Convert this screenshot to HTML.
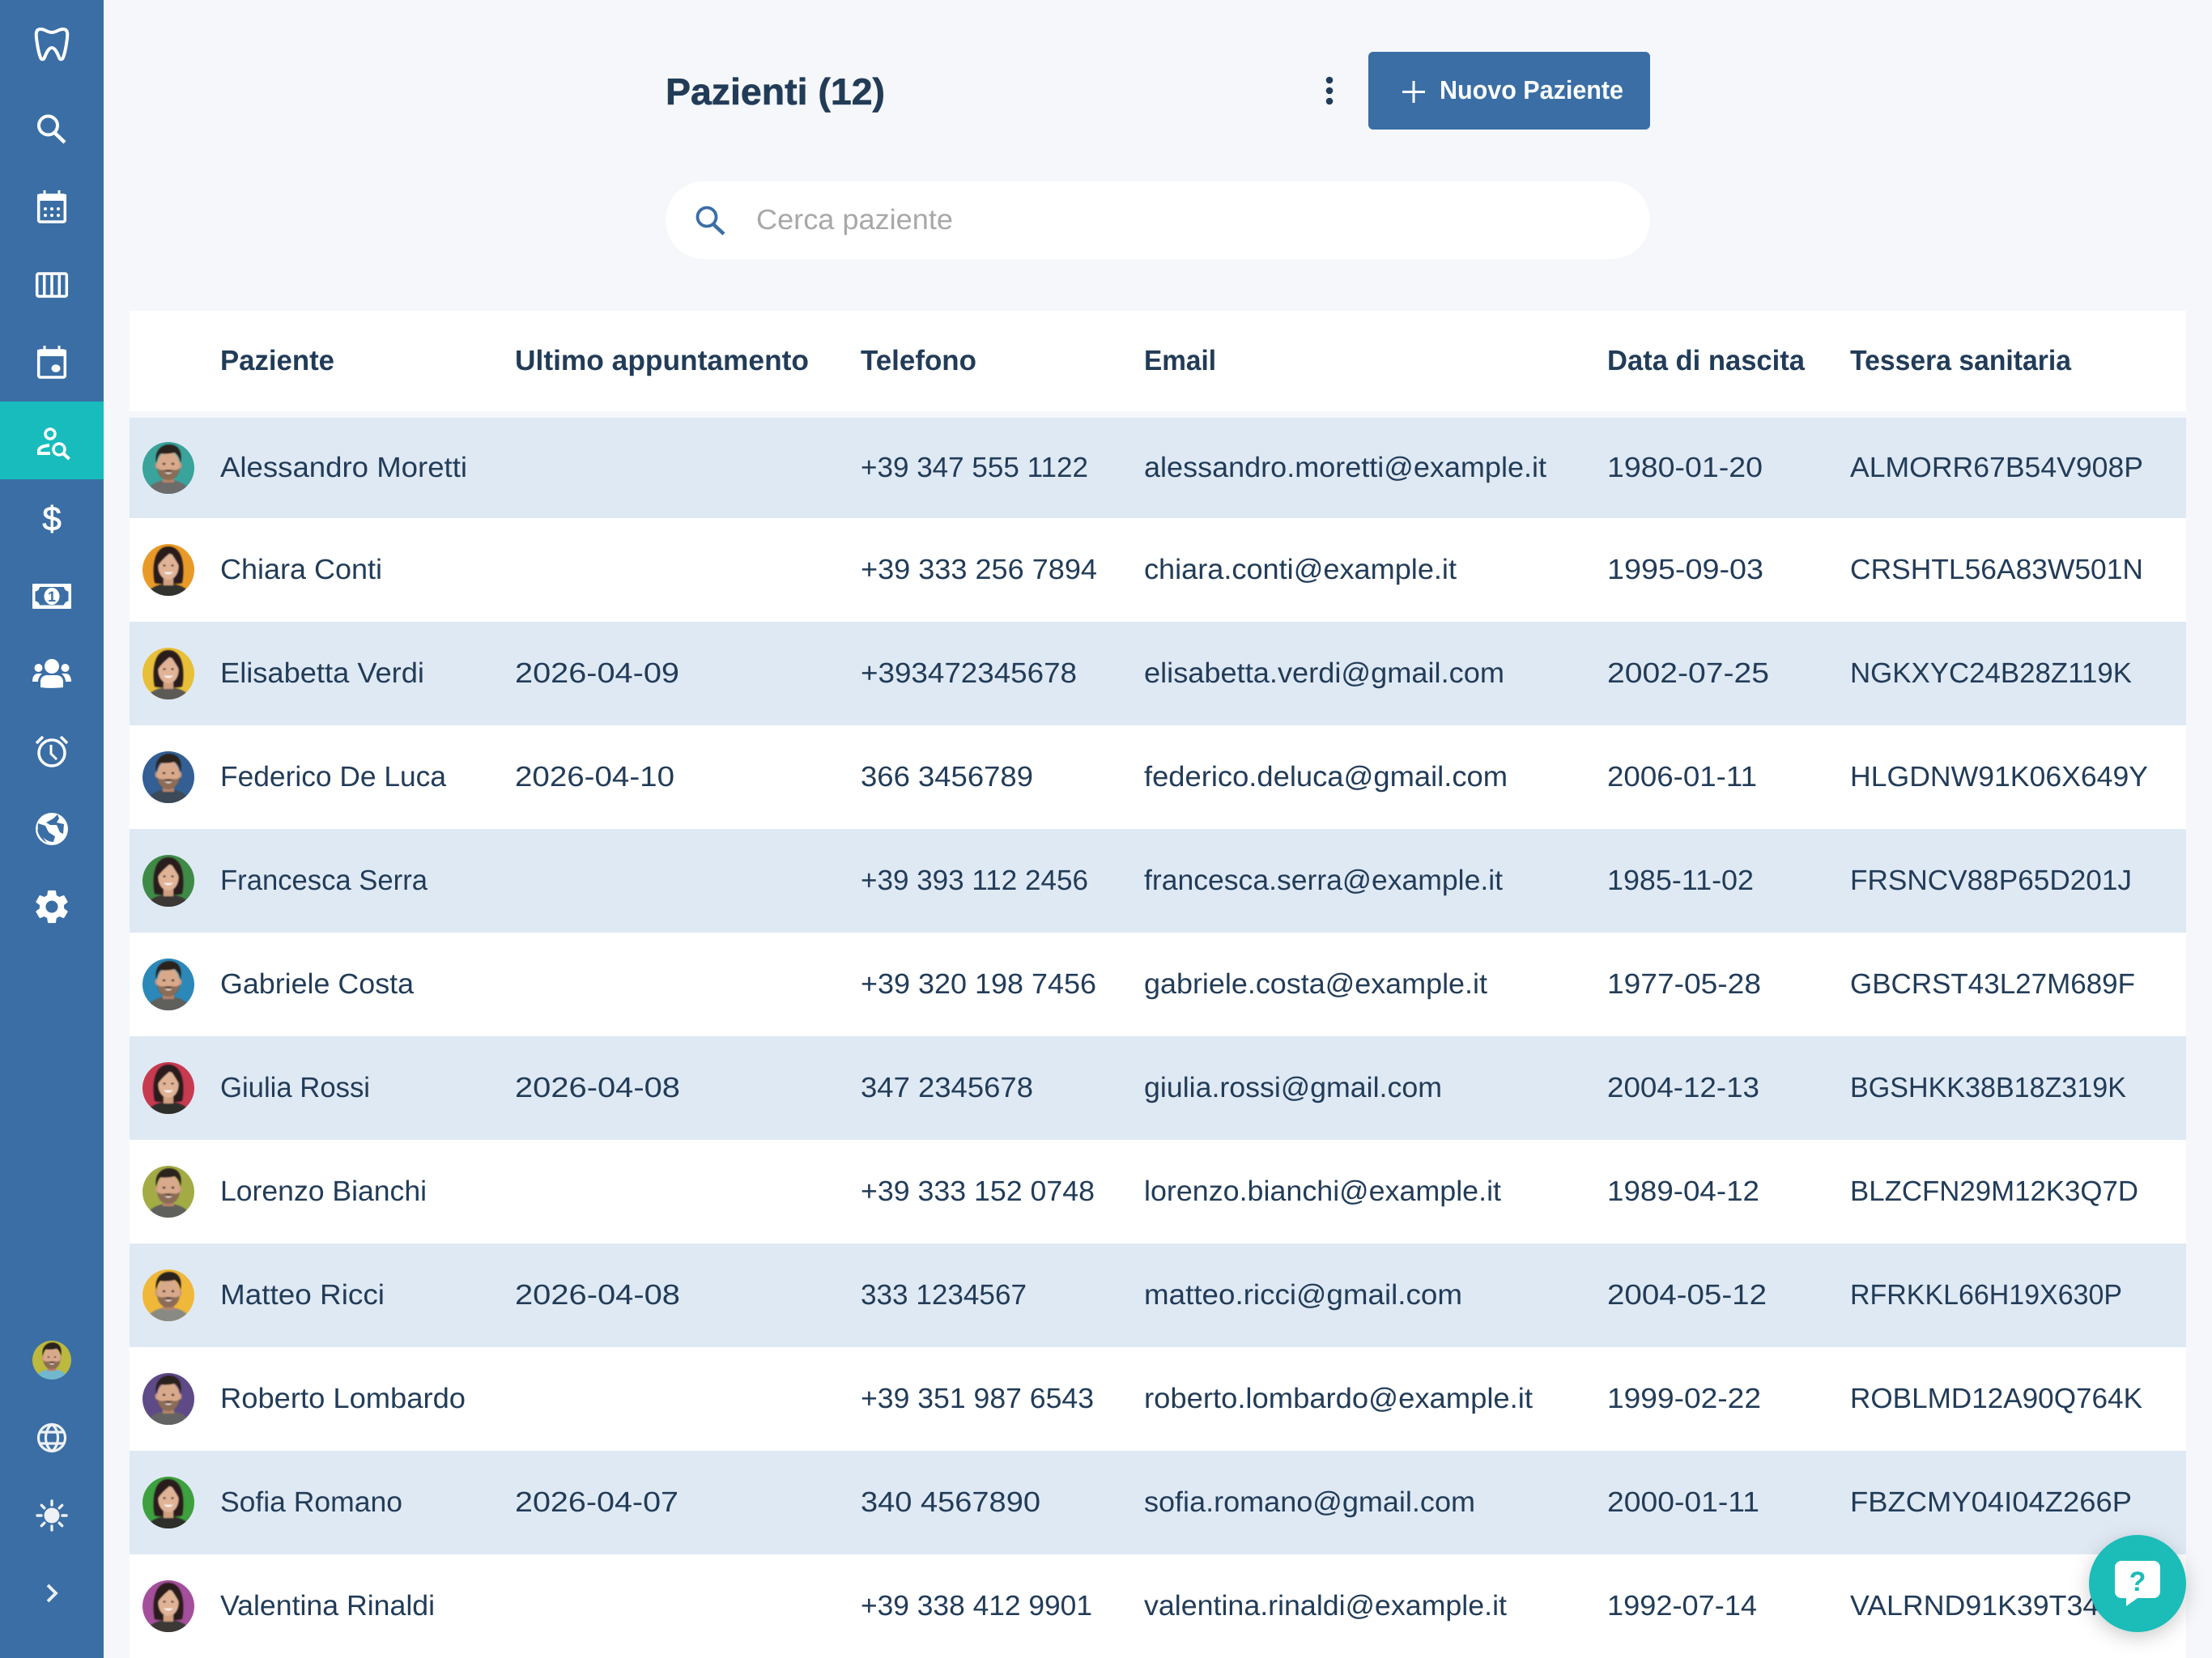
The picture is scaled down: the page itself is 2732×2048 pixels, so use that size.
<!DOCTYPE html>
<html lang="it">
<head>
<meta charset="utf-8">
<title>Pazienti</title>
<style>
html,body{margin:0;padding:0;background:#f5f7fb;width:2732px;height:2048px;overflow:hidden}
svg{display:block}
text{font-family:"Liberation Sans",sans-serif;text-rendering:geometricPrecision}
.t{font-size:35px;fill:#223c58}
.h{font-size:35px;font-weight:700;fill:#223c58}
.i{fill:none;stroke:#fff;stroke-width:3.5}
</style>
</head>
<body>
<svg xmlns="http://www.w3.org/2000/svg" width="2732" height="2048" viewBox="0 0 2732 2048">
<defs>
<clipPath id="c"><circle r="32"/></clipPath>
<filter id="b" x="-10%" y="-10%" width="120%" height="120%"><feGaussianBlur stdDeviation="0.7"/></filter>
<filter id="sh" x="-40%" y="-40%" width="180%" height="180%"><feDropShadow dx="0" dy="6" stdDeviation="12" flood-color="#000" flood-opacity="0.2"/></filter>
<g id="man" clip-path="url(#c)"><g filter="url(#b)">
<path d="M-28 34C-26 20-12 15 0 15C12 15 26 20 28 34Z"/>
<rect x="-7" y="6" width="14" height="12" fill="#b5846a"/>
<ellipse cx="-14" cy="-3" rx="2.500" ry="4" fill="#c9977a"/><ellipse cx="14" cy="-3" rx="2.500" ry="4" fill="#c9977a"/>
<ellipse cx="0" cy="-3" rx="14" ry="18" fill="#d8a98b"/>
<path d="M-14 0C-13 12-5 15 0 15C5 15 13 12 14 0C10 4 6 2 0 2C-6 2-10 4-14 0Z" fill="#5c4436" opacity=".6"/>
<path d="M-5.500 3.500Q0 1.500 5.500 3.500Q0 4.500-5.500 3.500Z" fill="#3a2a22"/>
<path d="M-15-6C-18-23-7-29 1-29C11-29 18-22 15-6C14-12 12-16 8-19C1-17-7-17-10-18C-13-15-14-10-15-6Z" fill="#2a211d"/>
<ellipse cx="-5.500" cy="-5" rx="1.800" ry="1.200" fill="#2a1d18"/><ellipse cx="5.500" cy="-5" rx="1.800" ry="1.200" fill="#2a1d18"/>
<path d="M-5 5.500Q0 9 5 5.500Q0 6.500-5 5.500Z" fill="#fff"/>
</g></g>
<g id="wom" clip-path="url(#c)"><g filter="url(#b)">
<path d="M-17 16C-20 2-20-29 0-29C20-29 20 2 17 16C12 18-12 18-17 16Z" fill="#2a1e1a"/>
<path d="M-28 34C-26 22-12 17 0 17C12 17 26 22 28 34Z"/>
<rect x="-6" y="6" width="12" height="13" fill="#cf9f80"/>
<ellipse cx="0" cy="-4" rx="12.500" ry="16" fill="#e0b396"/>
<path d="M-13-5C-13-17-6-21 3-22C-3-16-8-13-13-5ZM13-5C13-14 9-20 3-22C6-16 9-13 13-5Z" fill="#2a1e1a"/>
<ellipse cx="-5" cy="-5.500" rx="1.700" ry="1.100" fill="#2a1d18"/><ellipse cx="5" cy="-5.500" rx="1.700" ry="1.100" fill="#2a1d18"/>
<path d="M-6 2.500Q0 8 6 2.500Q0 3.500-6 2.500Z" fill="#fff"/>
</g></g>
</defs>

<rect width="2732" height="2048" fill="#f5f7fb"/>

<!-- Sidebar -->
<rect width="128" height="2048" fill="#3a6ea5"/>
<rect y="496" width="128" height="96" fill="#18bcbc"/>

<path class="i" style="stroke-width:4" stroke-linejoin="round" d="M50 36C44 36 44.500 42 45 47C46 55 48 66 50 71C51 74 54 74 55 71C57 66 60 59 64 59C68 59 71 66 73 71C74 74 77 74 78 71C80 66 82 55 83 47C83.500 42 84 36 78 36C72 36 70 40 64 40C58 40 56 36 50 36Z"/>

<circle class="i" cx="59.500" cy="155" r="11.500" style="stroke-width:4"/>
<path class="i" d="M67.500 164L80 176" style="stroke-width:4.500"/>

<rect class="i" x="47.700" y="241" width="32.600" height="33" rx="2"/>
<rect x="46" y="240" width="36" height="8" fill="#fff"/>
<rect x="53.500" y="235" width="3" height="6" fill="#fff"/><rect x="71.500" y="235" width="3" height="6" fill="#fff"/>
<g fill="#fff"><circle cx="56" cy="258" r="2"/><circle cx="64" cy="258" r="2"/><circle cx="72" cy="258" r="2"/><circle cx="56" cy="266" r="2"/><circle cx="64" cy="266" r="2"/><circle cx="72" cy="266" r="2"/></g>

<rect class="i" x="45.700" y="338" width="36.600" height="28" rx="2"/>
<path class="i" d="M54.700 338V366M64 338V366M73.300 338V366"/>

<rect class="i" x="47.700" y="433" width="32.600" height="33" rx="2"/>
<rect x="46" y="432" width="36" height="8" fill="#fff"/>
<rect x="53.500" y="427" width="3" height="6" fill="#fff"/><rect x="71.500" y="427" width="3" height="6" fill="#fff"/>
<ellipse cx="69" cy="455" rx="5.500" ry="4.800" fill="#fff"/>

<circle class="i" cx="62" cy="536" r="6" style="stroke-width:3.500"/>
<path class="i" d="M61 550C52 551 48 553 48 557V560H62" style="stroke-width:4"/>
<circle class="i" cx="73" cy="555" r="7" style="stroke-width:3.500"/>
<path class="i" d="M78.500 560.500L85.500 567" style="stroke-width:4"/>

<text x="64" y="655" text-anchor="middle" font-size="42" fill="#fff" stroke="#fff" stroke-width="0.8">$</text>

<rect x="40" y="721" width="48" height="31" rx="1" fill="#fff"/>
<path d="M49 725H79C79.500 728 81 730 84.500 730.500V742.500C81 743 79.500 745 79 747.500H49C48.500 745 47 743 43.500 742.500V730.500C47 730 48.500 728 49 725Z" fill="#3a6ea5"/>
<ellipse cx="64" cy="736.500" rx="9.500" ry="10.500" fill="#fff"/>
<text x="64" y="743" text-anchor="middle" font-size="18" font-weight="700" fill="#3a6ea5">1</text>

<g fill="#fff">
<circle cx="64" cy="823" r="9"/>
<path d="M50 849V842C50 836 55 834 58 834H70C73 834 78 836 78 842V849C78 849 64 851 50 849Z"/>
<circle cx="47.500" cy="825" r="5"/><circle cx="80.500" cy="825" r="5"/>
<path d="M40 842C40 835 43 832 47 832H52C49 835 47 838 47 842Z"/>
<path d="M88 842C88 835 85 832 81 832H76C79 835 81 838 81 842Z"/>
</g>

<circle class="i" cx="64" cy="930" r="16" style="stroke-width:3.500"/>
<path class="i" d="M63 920V931L70 938" style="stroke-width:3"/>
<path class="i" d="M45 918L53 910M83 918L75 910" style="stroke-width:3.500"/>

<circle cx="64" cy="1024" r="20" fill="#fff"/>
<path d="M46 1024C47 1032 52 1038 58 1041C54 1036 50 1030 46 1024Z" fill="#3a6ea5"/>
<path d="M47 1017L56 1020L60 1028L68 1033L66 1040C58 1040 52 1034 47.500 1028C46.500 1024 46.500 1020 47 1017Z" fill="#3a6ea5"/>
<path d="M57 1016L66 1011L71 1006L73 1011L70 1016L79 1018L78 1030L74 1028L70 1019L62 1019Z" fill="#3a6ea5"/>

<path transform="translate(64 1120) scale(2.1) translate(-12 -12)" fill="#fff" fill-rule="evenodd" d="M19.14 12.94c.04-.3.06-.61.06-.94 0-.32-.02-.64-.07-.94l2.03-1.58c.18-.14.23-.41.12-.61l-1.92-3.32c-.12-.22-.37-.29-.59-.22l-2.39.96c-.5-.38-1.03-.7-1.62-.94l-.36-2.54c-.04-.24-.24-.41-.48-.41h-3.84c-.24 0-.43.17-.47.41l-.36 2.54c-.59.24-1.13.57-1.62.94l-2.39-.96c-.22-.08-.47 0-.59.22L2.74 8.87c-.12.21-.08.47.12.61l2.03 1.58c-.05.3-.09.63-.09.94s.02.64.07.94l-2.03 1.58c-.18.14-.23.41-.12.61l1.92 3.32c.12.22.37.29.59.22l2.39-.96c.5.38 1.03.7 1.62.94l.36 2.54c.05.24.24.41.48.41h3.84c.24 0 .44-.17.47-.41l.36-2.54c.59-.24 1.13-.56 1.62-.94l2.39.96c.22.08.47 0 .59-.22l1.92-3.32c.12-.22.07-.47-.12-.61l-2.01-1.58zM12 15.6c-1.98 0-3.6-1.62-3.6-3.6s1.62-3.6 3.6-3.6 3.6 1.62 3.6 3.6-1.62 3.6-3.6 3.6z"/>

<g transform="translate(64 1680) scale(.75)"><circle r="32" fill="#bcb93e"/><use href="#man" fill="#6fb8d0"/></g>

<g fill="none" stroke="#eef1f5" stroke-width="3.2">
<circle cx="64" cy="1776" r="16.500"/>
<path d="M64 1759.500C54 1766 54 1786 64 1792.500C74 1786 74 1766 64 1759.500Z"/>
<path d="M49 1769H79M49 1783H79"/>
</g>

<circle cx="64" cy="1872" r="9.500" fill="#eef1f5"/>
<path fill="none" stroke="#eef1f5" stroke-width="3.400" stroke-linecap="round" d="M64 1854V1859M64 1885V1890M46 1872H51M77 1872H82M51.300 1859.300L54.800 1862.800M73.200 1881.200L76.700 1884.700M51.300 1884.700L54.800 1881.200M73.200 1862.800L76.700 1859.300"/>

<path fill="none" stroke="#eef1f5" stroke-width="3.800" d="M59 1958L69 1968L59 1978"/>

<!-- Top -->
<text x="822" y="129" font-size="46" font-weight="700" fill="#223c58" stroke="#223c58" stroke-width="0.6" textLength="271" lengthAdjust="spacingAndGlyphs">Pazienti (12)</text>
<g fill="#223c58"><circle cx="1642" cy="99" r="4.300"/><circle cx="1642" cy="112" r="4.300"/><circle cx="1642" cy="125" r="4.300"/></g>
<rect x="1690" y="64" width="348" height="96" rx="6" fill="#3a6ea5"/>
<path d="M1746 100V127M1732 113.500H1760" stroke="#fff" stroke-width="3" fill="none"/>
<text x="1778" y="122" font-size="32" font-weight="700" fill="#fff" textLength="227" lengthAdjust="spacingAndGlyphs">Nuovo Paziente</text>

<rect x="822" y="224" width="1216" height="96" rx="48" fill="#fff"/>
<circle cx="873" cy="268" r="11.500" fill="none" stroke="#3a6ea5" stroke-width="3.800"/>
<path d="M881 277L894 289" stroke="#3a6ea5" stroke-width="4.500" fill="none"/>
<text x="934" y="283" font-size="35" fill="#a8a8a8" textLength="243" lengthAdjust="spacingAndGlyphs">Cerca paziente</text>

<!-- Table backgrounds -->
<rect x="160" y="384" width="2540" height="124" fill="#fff"/>
<rect x="160" y="516" width="2540" height="124" fill="#dfe9f4"/>
<rect x="160" y="640" width="2540" height="128" fill="#fff"/>
<rect x="160" y="768" width="2540" height="128" fill="#dfe9f4"/>
<rect x="160" y="896" width="2540" height="128" fill="#fff"/>
<rect x="160" y="1024" width="2540" height="128" fill="#dfe9f4"/>
<rect x="160" y="1152" width="2540" height="128" fill="#fff"/>
<rect x="160" y="1280" width="2540" height="128" fill="#dfe9f4"/>
<rect x="160" y="1408" width="2540" height="128" fill="#fff"/>
<rect x="160" y="1536" width="2540" height="128" fill="#dfe9f4"/>
<rect x="160" y="1664" width="2540" height="128" fill="#fff"/>
<rect x="160" y="1792" width="2540" height="128" fill="#dfe9f4"/>
<rect x="160" y="1920" width="2540" height="128" fill="#fff"/>

<!-- Header -->
<text class="h" x="272" y="457" textLength="141" lengthAdjust="spacingAndGlyphs">Paziente</text>
<text class="h" x="636" y="457" textLength="363" lengthAdjust="spacingAndGlyphs">Ultimo appuntamento</text>
<text class="h" x="1063" y="457" textLength="143" lengthAdjust="spacingAndGlyphs">Telefono</text>
<text class="h" x="1413" y="457" textLength="89" lengthAdjust="spacingAndGlyphs">Email</text>
<text class="h" x="1985" y="457" textLength="244" lengthAdjust="spacingAndGlyphs">Data di nascita</text>
<text class="h" x="2285" y="457" textLength="273" lengthAdjust="spacingAndGlyphs">Tessera sanitaria</text>

<!-- Avatars -->
<g transform="translate(208 578)"><circle r="32" fill="#3aa39b"/><use href="#man" fill="#6c6c6a"/></g>
<g transform="translate(208 704)"><circle r="32" fill="#e89a28"/><use href="#wom" fill="#33302e"/></g>
<g transform="translate(208 832)"><circle r="32" fill="#e8bf38"/><use href="#wom" fill="#5c5a56"/></g>
<g transform="translate(208 960)"><circle r="32" fill="#335f95"/><use href="#man" fill="#3a4a58"/></g>
<g transform="translate(208 1088)"><circle r="32" fill="#3f8a47"/><use href="#wom" fill="#3a3836"/></g>
<g transform="translate(208 1216)"><circle r="32" fill="#2c88b8"/><use href="#man" fill="#5e5e5c"/></g>
<g transform="translate(208 1344)"><circle r="32" fill="#c73a50"/><use href="#wom" fill="#2e2e2c"/></g>
<g transform="translate(208 1472)"><circle r="32" fill="#a3ab45"/><use href="#man" fill="#5e5e5c"/></g>
<g transform="translate(208 1600)"><circle r="32" fill="#f0b83a"/><use href="#man" fill="#8a8a84"/></g>
<g transform="translate(208 1728)"><circle r="32" fill="#5d4a87"/><use href="#man" fill="#636363"/></g>
<g transform="translate(208 1856)"><circle r="32" fill="#3ea03f"/><use href="#wom" fill="#2e2e2c"/></g>
<g transform="translate(208 1984)"><circle r="32" fill="#a44f9c"/><use href="#wom" fill="#3a3836"/></g>

<!-- Rows -->
<g>
<text class="t" x="272" y="589" textLength="305" lengthAdjust="spacingAndGlyphs">Alessandro Moretti</text>
<text class="t" x="1063" y="589" textLength="281" lengthAdjust="spacingAndGlyphs">+39 347 555 1122</text>
<text class="t" x="1413" y="589" textLength="497" lengthAdjust="spacingAndGlyphs">alessandro.moretti@example.it</text>
<text class="t" x="1985" y="589" textLength="192" lengthAdjust="spacingAndGlyphs">1980-01-20</text>
<text class="t" x="2285" y="589" textLength="362" lengthAdjust="spacingAndGlyphs">ALMORR67B54V908P</text>

<text class="t" x="272" y="715" textLength="200" lengthAdjust="spacingAndGlyphs">Chiara Conti</text>
<text class="t" x="1063" y="715" textLength="292" lengthAdjust="spacingAndGlyphs">+39 333 256 7894</text>
<text class="t" x="1413" y="715" textLength="386" lengthAdjust="spacingAndGlyphs">chiara.conti@example.it</text>
<text class="t" x="1985" y="715" textLength="193" lengthAdjust="spacingAndGlyphs">1995-09-03</text>
<text class="t" x="2285" y="715" textLength="362" lengthAdjust="spacingAndGlyphs">CRSHTL56A83W501N</text>

<text class="t" x="272" y="843" textLength="252" lengthAdjust="spacingAndGlyphs">Elisabetta Verdi</text>
<text class="t" x="636" y="843" textLength="203" lengthAdjust="spacingAndGlyphs">2026-04-09</text>
<text class="t" x="1063" y="843" textLength="267" lengthAdjust="spacingAndGlyphs">+393472345678</text>
<text class="t" x="1413" y="843" textLength="445" lengthAdjust="spacingAndGlyphs">elisabetta.verdi@gmail.com</text>
<text class="t" x="1985" y="843" textLength="200" lengthAdjust="spacingAndGlyphs">2002-07-25</text>
<text class="t" x="2285" y="843" textLength="348" lengthAdjust="spacingAndGlyphs">NGKXYC24B28Z119K</text>

<text class="t" x="272" y="971" textLength="279" lengthAdjust="spacingAndGlyphs">Federico De Luca</text>
<text class="t" x="636" y="971" textLength="197" lengthAdjust="spacingAndGlyphs">2026-04-10</text>
<text class="t" x="1063" y="971" textLength="213" lengthAdjust="spacingAndGlyphs">366 3456789</text>
<text class="t" x="1413" y="971" textLength="449" lengthAdjust="spacingAndGlyphs">federico.deluca@gmail.com</text>
<text class="t" x="1985" y="971" textLength="185" lengthAdjust="spacingAndGlyphs">2006-01-11</text>
<text class="t" x="2285" y="971" textLength="368" lengthAdjust="spacingAndGlyphs">HLGDNW91K06X649Y</text>

<text class="t" x="272" y="1099" textLength="256" lengthAdjust="spacingAndGlyphs">Francesca Serra</text>
<text class="t" x="1063" y="1099" textLength="281" lengthAdjust="spacingAndGlyphs">+39 393 112 2456</text>
<text class="t" x="1413" y="1099" textLength="443" lengthAdjust="spacingAndGlyphs">francesca.serra@example.it</text>
<text class="t" x="1985" y="1099" textLength="181" lengthAdjust="spacingAndGlyphs">1985-11-02</text>
<text class="t" x="2285" y="1099" textLength="348" lengthAdjust="spacingAndGlyphs">FRSNCV88P65D201J</text>

<text class="t" x="272" y="1227" textLength="239" lengthAdjust="spacingAndGlyphs">Gabriele Costa</text>
<text class="t" x="1063" y="1227" textLength="291" lengthAdjust="spacingAndGlyphs">+39 320 198 7456</text>
<text class="t" x="1413" y="1227" textLength="424" lengthAdjust="spacingAndGlyphs">gabriele.costa@example.it</text>
<text class="t" x="1985" y="1227" textLength="190" lengthAdjust="spacingAndGlyphs">1977-05-28</text>
<text class="t" x="2285" y="1227" textLength="352" lengthAdjust="spacingAndGlyphs">GBCRST43L27M689F</text>

<text class="t" x="272" y="1355" textLength="185" lengthAdjust="spacingAndGlyphs">Giulia Rossi</text>
<text class="t" x="636" y="1355" textLength="204" lengthAdjust="spacingAndGlyphs">2026-04-08</text>
<text class="t" x="1063" y="1355" textLength="213" lengthAdjust="spacingAndGlyphs">347 2345678</text>
<text class="t" x="1413" y="1355" textLength="368" lengthAdjust="spacingAndGlyphs">giulia.rossi@gmail.com</text>
<text class="t" x="1985" y="1355" textLength="188" lengthAdjust="spacingAndGlyphs">2004-12-13</text>
<text class="t" x="2285" y="1355" textLength="341" lengthAdjust="spacingAndGlyphs">BGSHKK38B18Z319K</text>

<text class="t" x="272" y="1483" textLength="255" lengthAdjust="spacingAndGlyphs">Lorenzo Bianchi</text>
<text class="t" x="1063" y="1483" textLength="289" lengthAdjust="spacingAndGlyphs">+39 333 152 0748</text>
<text class="t" x="1413" y="1483" textLength="441" lengthAdjust="spacingAndGlyphs">lorenzo.bianchi@example.it</text>
<text class="t" x="1985" y="1483" textLength="188" lengthAdjust="spacingAndGlyphs">1989-04-12</text>
<text class="t" x="2285" y="1483" textLength="356" lengthAdjust="spacingAndGlyphs">BLZCFN29M12K3Q7D</text>

<text class="t" x="272" y="1611" textLength="203" lengthAdjust="spacingAndGlyphs">Matteo Ricci</text>
<text class="t" x="636" y="1611" textLength="204" lengthAdjust="spacingAndGlyphs">2026-04-08</text>
<text class="t" x="1063" y="1611" textLength="205" lengthAdjust="spacingAndGlyphs">333 1234567</text>
<text class="t" x="1413" y="1611" textLength="393" lengthAdjust="spacingAndGlyphs">matteo.ricci@gmail.com</text>
<text class="t" x="1985" y="1611" textLength="197" lengthAdjust="spacingAndGlyphs">2004-05-12</text>
<text class="t" x="2285" y="1611" textLength="336" lengthAdjust="spacingAndGlyphs">RFRKKL66H19X630P</text>

<text class="t" x="272" y="1739" textLength="303" lengthAdjust="spacingAndGlyphs">Roberto Lombardo</text>
<text class="t" x="1063" y="1739" textLength="288" lengthAdjust="spacingAndGlyphs">+39 351 987 6543</text>
<text class="t" x="1413" y="1739" textLength="480" lengthAdjust="spacingAndGlyphs">roberto.lombardo@example.it</text>
<text class="t" x="1985" y="1739" textLength="190" lengthAdjust="spacingAndGlyphs">1999-02-22</text>
<text class="t" x="2285" y="1739" textLength="361" lengthAdjust="spacingAndGlyphs">ROBLMD12A90Q764K</text>

<text class="t" x="272" y="1867" textLength="225" lengthAdjust="spacingAndGlyphs">Sofia Romano</text>
<text class="t" x="636" y="1867" textLength="202" lengthAdjust="spacingAndGlyphs">2026-04-07</text>
<text class="t" x="1063" y="1867" textLength="222" lengthAdjust="spacingAndGlyphs">340 4567890</text>
<text class="t" x="1413" y="1867" textLength="409" lengthAdjust="spacingAndGlyphs">sofia.romano@gmail.com</text>
<text class="t" x="1985" y="1867" textLength="188" lengthAdjust="spacingAndGlyphs">2000-01-11</text>
<text class="t" x="2285" y="1867" textLength="348" lengthAdjust="spacingAndGlyphs">FBZCMY04I04Z266P</text>

<text class="t" x="272" y="1995" textLength="265" lengthAdjust="spacingAndGlyphs">Valentina Rinaldi</text>
<text class="t" x="1063" y="1995" textLength="286" lengthAdjust="spacingAndGlyphs">+39 338 412 9901</text>
<text class="t" x="1413" y="1995" textLength="448" lengthAdjust="spacingAndGlyphs">valentina.rinaldi@example.it</text>
<text class="t" x="1985" y="1995" textLength="185" lengthAdjust="spacingAndGlyphs">1992-07-14</text>
<text class="t" x="2285" y="1995" textLength="345" lengthAdjust="spacingAndGlyphs">VALRND91K39T345J</text>
</g>

<!-- Help button -->
<circle cx="2640" cy="1956" r="60" fill="#1abcb8" filter="url(#sh)"/>
<path d="M2620 1928H2660A8 8 0 0 1 2668 1936V1966A8 8 0 0 1 2660 1974H2640L2626 1984V1974H2620A8 8 0 0 1 2612 1966V1936A8 8 0 0 1 2620 1928Z" fill="#fff"/>
<text x="2640" y="1965" text-anchor="middle" font-size="34" font-weight="700" fill="#1abcb8">?</text>
</svg>
</body>
</html>
